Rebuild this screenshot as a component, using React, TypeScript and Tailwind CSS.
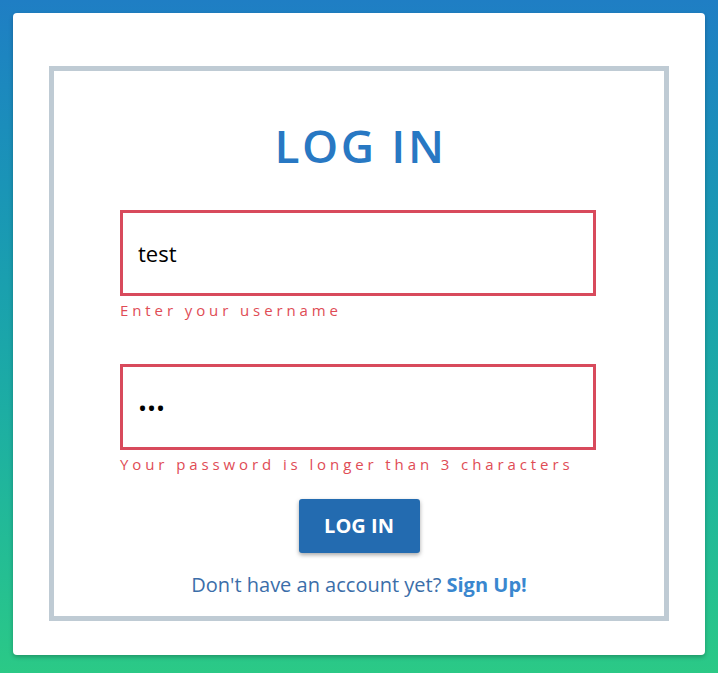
import { useState } from "react";

const font = { fontFamily: '"Open Sans", "Noto Sans", Arial, sans-serif' };

export default function App() {
  const [username, setUsername] = useState("test");
  const [password, setPassword] = useState("abc");

  return (
    <div
      className="min-h-[673px] w-full bg-gradient-to-b from-[#1f7ec4] to-[#2bc986] p-[13px] pb-[17px]"
      style={font}
    >
      <div className="rounded bg-white px-[36px] pb-[34px] pt-[53px] shadow-[0_2px_4px_rgba(0,0,0,0.25)]">
        <div className="flex flex-col items-center border-[5px] border-[#bfcbd4] px-[66px] pb-[16px] pt-[46px]">
          <h1 className="pl-[3px] text-[46px] font-semibold leading-[56px] tracking-[2.6px] text-[#2878c3]">
            LOG IN
          </h1>

          <div className="mt-[37px] w-[476px] self-start">
            <input
              value={username}
              onChange={(e) => setUsername(e.target.value)}
              className="h-[86px] w-full border-[3px] border-[#d84a5c] px-[15px] text-[22px] text-black outline-none"
            />
            <p className="mt-[2px] text-[15px] leading-[24px] tracking-[3.9px] text-[#e04c55]">
              Enter your username
            </p>
          </div>

          <div className="mt-[42px] w-[476px] self-start">
            <input
              type="password"
              value={password}
              onChange={(e) => setPassword(e.target.value)}
              className="h-[86px] w-full border-[3px] border-[#d84a5c] px-[15px] text-[24px] text-black outline-none"
            />
            <p className="mt-[2px] text-[15px] leading-[24px] tracking-[3.9px] text-[#e04c55]">
              Your password is longer than 3 characters
            </p>
          </div>

          <button className="mt-[23px] h-[54px] w-[121px] rounded-[3px] bg-[#236bb0] text-[20px] font-bold text-white shadow-[0_2px_4px_rgba(0,0,0,0.35)]">
            LOG IN
          </button>

          <p className="mt-[17px] text-[20px] text-[#3b6ea9]">
            Don't have an account yet?{" "}
            <a href="#" className="font-bold text-[#3a87cf]">
              Sign Up!
            </a>
          </p>
        </div>
      </div>
    </div>
  );
}
